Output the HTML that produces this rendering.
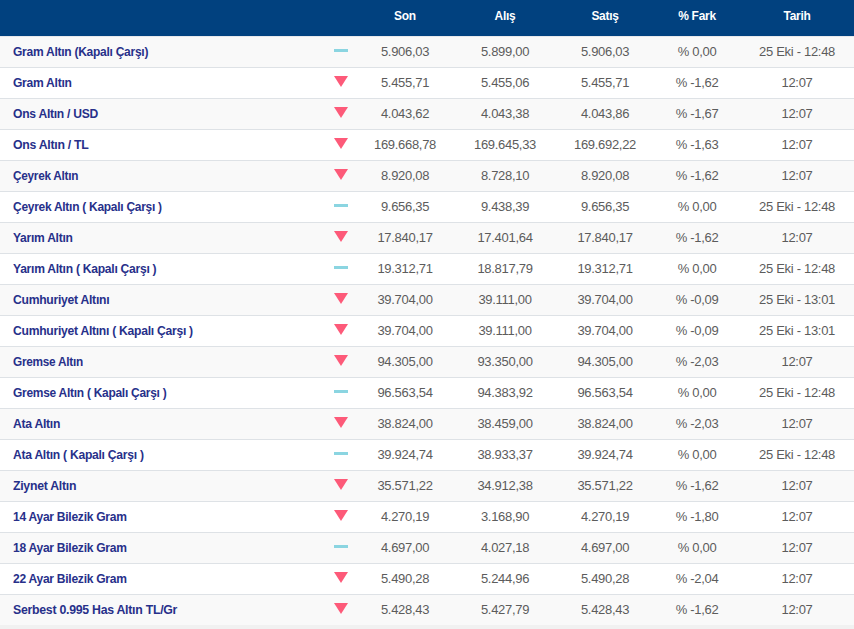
<!DOCTYPE html>
<html><head><meta charset="utf-8"><style>
html,body{margin:0;padding:0}
body{width:854px;height:629px;background:#f1f1f1;position:relative;overflow:hidden;font-family:"Liberation Sans",sans-serif}
.hd{position:absolute;left:0;top:0;width:854px;height:36px;background:#01417f;z-index:2}
.hl{position:absolute;left:0;top:36px;width:854px;height:1px;background:#e6e8ec;z-index:2}
.hd span{position:absolute;top:0;height:36px;line-height:32px;color:#fff;font-weight:bold;font-size:13px;width:120px;text-align:center;letter-spacing:-0.3px;transform:scaleX(0.92)}
.r{position:absolute;left:0;width:854px;background:#fff;border-bottom:1px solid #dee2e6}
.r.s{background:#f9f9f9}
.r span{position:absolute;top:0;white-space:nowrap}
.n{left:12.5px;color:#27308a;font-weight:bold;font-size:13.5px;letter-spacing:-0.3px;transform:scaleX(0.934);transform-origin:0 50%}
.v{width:120px;text-align:center;color:#5c5c5c;font-size:13px;letter-spacing:-0.3px}
.dash{position:absolute;left:334px;width:14px;height:3px;background:#8bd5e1}
.tri{position:absolute;left:334px;width:0;height:0;border-left:7px solid transparent;border-right:7px solid transparent;border-top:11px solid #fd5a79}
</style></head><body>
<div class="hd">
<span style="left:345px">Son</span>
<span style="left:445px">Alış</span>
<span style="left:545px">Satış</span>
<span style="left:637px">% Fark</span>
<span style="left:737px">Tarih</span>
</div><div class="hl"></div>
<div class="r s" style="top:36px;height:31px;line-height:31px">
<span class="n" style="transform:scaleX(0.8906)">Gram Altın (Kapalı Çarşı)</span>
<i class="dash" style="top:13px"></i>
<span class="v" style="left:345px">5.906,03</span>
<span class="v" style="left:445px">5.899,00</span>
<span class="v" style="left:545px">5.906,03</span>
<span class="v" style="left:637px">% 0,00</span>
<span class="v" style="left:737px">25 Eki - 12:48</span>
</div>
<div class="r" style="top:68px;height:30px;line-height:30px">
<span class="n" style="transform:scaleX(0.8942)">Gram Altın</span>
<i class="tri" style="top:8px"></i>
<span class="v" style="left:345px">5.455,71</span>
<span class="v" style="left:445px">5.455,06</span>
<span class="v" style="left:545px">5.455,71</span>
<span class="v" style="left:637px">% -1,62</span>
<span class="v" style="left:737px">12:07</span>
</div>
<div class="r s" style="top:99px;height:30px;line-height:30px">
<span class="n" style="transform:scaleX(0.8973)">Ons Altın / USD</span>
<i class="tri" style="top:8px"></i>
<span class="v" style="left:345px">4.043,62</span>
<span class="v" style="left:445px">4.043,38</span>
<span class="v" style="left:545px">4.043,86</span>
<span class="v" style="left:637px">% -1,67</span>
<span class="v" style="left:737px">12:07</span>
</div>
<div class="r" style="top:130px;height:30px;line-height:30px">
<span class="n" style="transform:scaleX(0.9101)">Ons Altın / TL</span>
<i class="tri" style="top:8px"></i>
<span class="v" style="left:345px">169.668,78</span>
<span class="v" style="left:445px">169.645,33</span>
<span class="v" style="left:545px">169.692,22</span>
<span class="v" style="left:637px">% -1,63</span>
<span class="v" style="left:737px">12:07</span>
</div>
<div class="r s" style="top:161px;height:30px;line-height:30px">
<span class="n" style="transform:scaleX(0.8726)">Çeyrek Altın</span>
<i class="tri" style="top:8px"></i>
<span class="v" style="left:345px">8.920,08</span>
<span class="v" style="left:445px">8.728,10</span>
<span class="v" style="left:545px">8.920,08</span>
<span class="v" style="left:637px">% -1,62</span>
<span class="v" style="left:737px">12:07</span>
</div>
<div class="r" style="top:192px;height:30px;line-height:30px">
<span class="n" style="transform:scaleX(0.8864)">Çeyrek Altın ( Kapalı Çarşı )</span>
<i class="dash" style="top:12px"></i>
<span class="v" style="left:345px">9.656,35</span>
<span class="v" style="left:445px">9.438,39</span>
<span class="v" style="left:545px">9.656,35</span>
<span class="v" style="left:637px">% 0,00</span>
<span class="v" style="left:737px">25 Eki - 12:48</span>
</div>
<div class="r s" style="top:223px;height:30px;line-height:30px">
<span class="n" style="transform:scaleX(0.894)">Yarım Altın</span>
<i class="tri" style="top:8px"></i>
<span class="v" style="left:345px">17.840,17</span>
<span class="v" style="left:445px">17.401,64</span>
<span class="v" style="left:545px">17.840,17</span>
<span class="v" style="left:637px">% -1,62</span>
<span class="v" style="left:737px">12:07</span>
</div>
<div class="r" style="top:254px;height:30px;line-height:30px">
<span class="n" style="transform:scaleX(0.8966)">Yarım Altın ( Kapalı Çarşı )</span>
<i class="dash" style="top:12px"></i>
<span class="v" style="left:345px">19.312,71</span>
<span class="v" style="left:445px">18.817,79</span>
<span class="v" style="left:545px">19.312,71</span>
<span class="v" style="left:637px">% 0,00</span>
<span class="v" style="left:737px">25 Eki - 12:48</span>
</div>
<div class="r s" style="top:285px;height:30px;line-height:30px">
<span class="n" style="transform:scaleX(0.9004)">Cumhuriyet Altını</span>
<i class="tri" style="top:8px"></i>
<span class="v" style="left:345px">39.704,00</span>
<span class="v" style="left:445px">39.111,00</span>
<span class="v" style="left:545px">39.704,00</span>
<span class="v" style="left:637px">% -0,09</span>
<span class="v" style="left:737px">25 Eki - 13:01</span>
</div>
<div class="r" style="top:316px;height:30px;line-height:30px">
<span class="n" style="transform:scaleX(0.899)">Cumhuriyet Altını ( Kapalı Çarşı )</span>
<i class="tri" style="top:8px"></i>
<span class="v" style="left:345px">39.704,00</span>
<span class="v" style="left:445px">39.111,00</span>
<span class="v" style="left:545px">39.704,00</span>
<span class="v" style="left:637px">% -0,09</span>
<span class="v" style="left:737px">25 Eki - 13:01</span>
</div>
<div class="r s" style="top:347px;height:30px;line-height:30px">
<span class="n" style="transform:scaleX(0.8742)">Gremse Altın</span>
<i class="tri" style="top:8px"></i>
<span class="v" style="left:345px">94.305,00</span>
<span class="v" style="left:445px">93.350,00</span>
<span class="v" style="left:545px">94.305,00</span>
<span class="v" style="left:637px">% -2,03</span>
<span class="v" style="left:737px">12:07</span>
</div>
<div class="r" style="top:378px;height:30px;line-height:30px">
<span class="n" style="transform:scaleX(0.8861)">Gremse Altın ( Kapalı Çarşı )</span>
<i class="dash" style="top:12px"></i>
<span class="v" style="left:345px">96.563,54</span>
<span class="v" style="left:445px">94.383,92</span>
<span class="v" style="left:545px">96.563,54</span>
<span class="v" style="left:637px">% 0,00</span>
<span class="v" style="left:737px">25 Eki - 12:48</span>
</div>
<div class="r s" style="top:409px;height:30px;line-height:30px">
<span class="n" style="transform:scaleX(0.9016)">Ata Altın</span>
<i class="tri" style="top:8px"></i>
<span class="v" style="left:345px">38.824,00</span>
<span class="v" style="left:445px">38.459,00</span>
<span class="v" style="left:545px">38.824,00</span>
<span class="v" style="left:637px">% -2,03</span>
<span class="v" style="left:737px">12:07</span>
</div>
<div class="r" style="top:440px;height:30px;line-height:30px">
<span class="n" style="transform:scaleX(0.8983)">Ata Altın ( Kapalı Çarşı )</span>
<i class="dash" style="top:12px"></i>
<span class="v" style="left:345px">39.924,74</span>
<span class="v" style="left:445px">38.933,37</span>
<span class="v" style="left:545px">39.924,74</span>
<span class="v" style="left:637px">% 0,00</span>
<span class="v" style="left:737px">25 Eki - 12:48</span>
</div>
<div class="r s" style="top:471px;height:30px;line-height:30px">
<span class="n" style="transform:scaleX(0.9096)">Ziynet Altın</span>
<i class="tri" style="top:8px"></i>
<span class="v" style="left:345px">35.571,22</span>
<span class="v" style="left:445px">34.912,38</span>
<span class="v" style="left:545px">35.571,22</span>
<span class="v" style="left:637px">% -1,62</span>
<span class="v" style="left:737px">12:07</span>
</div>
<div class="r" style="top:502px;height:30px;line-height:30px">
<span class="n" style="transform:scaleX(0.8924)">14 Ayar Bilezik Gram</span>
<i class="tri" style="top:8px"></i>
<span class="v" style="left:345px">4.270,19</span>
<span class="v" style="left:445px">3.168,90</span>
<span class="v" style="left:545px">4.270,19</span>
<span class="v" style="left:637px">% -1,80</span>
<span class="v" style="left:737px">12:07</span>
</div>
<div class="r s" style="top:533px;height:30px;line-height:30px">
<span class="n" style="transform:scaleX(0.8924)">18 Ayar Bilezik Gram</span>
<i class="dash" style="top:12px"></i>
<span class="v" style="left:345px">4.697,00</span>
<span class="v" style="left:445px">4.027,18</span>
<span class="v" style="left:545px">4.697,00</span>
<span class="v" style="left:637px">% 0,00</span>
<span class="v" style="left:737px">12:07</span>
</div>
<div class="r" style="top:564px;height:30px;line-height:30px">
<span class="n" style="transform:scaleX(0.8924)">22 Ayar Bilezik Gram</span>
<i class="tri" style="top:8px"></i>
<span class="v" style="left:345px">5.490,28</span>
<span class="v" style="left:445px">5.244,96</span>
<span class="v" style="left:545px">5.490,28</span>
<span class="v" style="left:637px">% -2,04</span>
<span class="v" style="left:737px">12:07</span>
</div>
<div class="r s" style="top:595px;height:30px;line-height:30px;border-bottom:0">
<span class="n" style="transform:scaleX(0.9124)">Serbest 0.995 Has Altın TL/Gr</span>
<i class="tri" style="top:8px"></i>
<span class="v" style="left:345px">5.428,43</span>
<span class="v" style="left:445px">5.427,79</span>
<span class="v" style="left:545px">5.428,43</span>
<span class="v" style="left:637px">% -1,62</span>
<span class="v" style="left:737px">12:07</span>
</div>
</body></html>
